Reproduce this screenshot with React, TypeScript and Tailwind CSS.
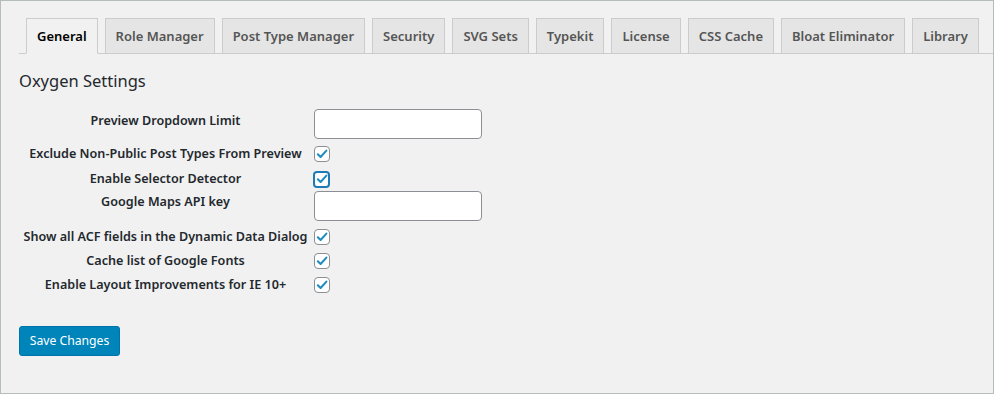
import React from "react";

const tabs = [
  "General",
  "Role Manager",
  "Post Type Manager",
  "Security",
  "SVG Sets",
  "Typekit",
  "License",
  "CSS Cache",
  "Bloat Eliminator",
  "Library",
];

function Check({ focused }: { focused?: boolean }) {
  return (
    <div
      className={
        focused
          ? "w-[17px] h-[17px] rounded-[4px] border-2 border-[#1e7bb5] bg-white flex items-center justify-center"
          : "w-[16px] h-[16px] rounded-[4px] border border-[#8c8f94] bg-white flex items-center justify-center"
      }
    >
      <svg width="12" height="12" viewBox="0 0 12 12">
        <path
          d="M1.8 6.2 L4.6 9 L10.4 2.6"
          fill="none"
          stroke="#1e8cbe"
          strokeWidth="2"
          strokeLinecap="round"
          strokeLinejoin="round"
        />
      </svg>
    </div>
  );
}

function Label({ children, pad }: { children: React.ReactNode; pad?: string }) {
  return (
    <div
      className={`w-[293px] shrink-0 whitespace-nowrap text-center text-[12.6px] leading-[20px] font-semibold text-[#23282d] ${pad ?? ""}`}
    >
      {children}
    </div>
  );
}

export default function App() {
  return (
    <div
      className="w-[994px] h-[394px] border border-[#b4bcbc] bg-[#f1f1f1] pl-[18px] pr-0 pt-[17px]"
      style={{ fontFamily: '"Noto Sans", "Open Sans", sans-serif' }}
    >
      <div className="flex items-end border-b border-[#ccc]">
        {tabs.map((t, i) => (
          <div
            key={t}
            className={
              i === 0
                ? "ml-[7px] -mb-px border border-[#ccc] border-b-[#f1f1f1] bg-[#f1f1f1] px-[10px] py-[5px] text-[13px] leading-[24px] font-semibold text-[#000]"
                : "ml-[7px] -mb-px border border-[#ccc] bg-[#e5e5e5] px-[10px] py-[5px] text-[13px] leading-[24px] font-semibold text-[#555]"
            }
          >
            {t}
          </div>
        ))}
      </div>

      <h2 className="mt-[15px] text-[16.5px] leading-[24px] font-normal text-[#23282d]">
        Oxygen Settings
      </h2>

      <div className="mt-[14px] flex flex-col">
        <div className="flex h-[34px] items-start gap-[2px]">
          <Label pad="pt-[4px]">Preview Dropdown Limit</Label>
          <div className="mt-[2px] w-[168px] h-[30px] rounded-[4px] border border-[#8c8f94] bg-white" />
        </div>
        <div className="flex h-[26px] items-center gap-[2px]">
          <Label>Exclude Non-Public Post Types From Preview</Label>
          <Check />
        </div>
        <div className="flex h-[24px] items-center gap-[2px]">
          <Label>Enable Selector Detector</Label>
          <div className="-ml-[1px]">
            <Check focused />
          </div>
        </div>
        <div className="flex h-[34px] items-start gap-[2px]">
          <Label pad="pt-[1px]">Google Maps API key</Label>
          <div className="w-[168px] h-[30px] rounded-[4px] border border-[#8c8f94] bg-white" />
        </div>
        <div className="flex h-[24px] items-center gap-[2px]">
          <Label>Show all ACF fields in the Dynamic Data Dialog</Label>
          <Check />
        </div>
        <div className="flex h-[24px] items-center gap-[2px]">
          <Label>Cache list of Google Fonts</Label>
          <Check />
        </div>
        <div className="flex h-[24px] items-center gap-[2px]">
          <Label>Enable Layout Improvements for IE 10+</Label>
          <Check />
        </div>
      </div>

      <button className="mt-[29px] w-[101px] h-[30px] rounded-[3px] bg-[#0085ba] text-white text-[12.2px] leading-[28px] border border-[#0073aa]">
        Save Changes
      </button>
    </div>
  );
}
